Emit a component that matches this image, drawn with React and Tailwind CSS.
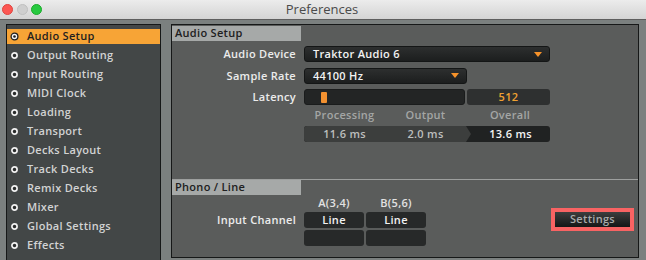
import React from 'react';

const font = { fontFamily: '"Open Sans", "Liberation Sans", Arial, sans-serif' };

const items = [
  'Audio Setup',
  'Output Routing',
  'Input Routing',
  'MIDI Clock',
  'Loading',
  'Transport',
  'Decks Layout',
  'Track Decks',
  'Remix Decks',
  'Mixer',
  'Global Settings',
  'Effects',
];

const Radio = ({ active }) =>
  active ? (
    <svg width="9" height="9" viewBox="0 0 9 9" className="shrink-0">
      <circle cx="4.5" cy="4.5" r="3.4" fill="#f4f4f4" stroke="#1e1e1e" strokeWidth="1.3" />
      <circle cx="4.5" cy="4.5" r="1.3" fill="#1e1e1e" />
    </svg>
  ) : (
    <svg width="9" height="9" viewBox="0 0 9 9" className="shrink-0">
      <circle cx="4.5" cy="4.5" r="2.6" fill="#2a2c2c" stroke="#f0f0f0" strokeWidth="1.7" />
    </svg>
  );

const Caret = () => (
  <svg width="8" height="5" viewBox="0 0 8 5" className="shrink-0">
    <path d="M0 0 H8 L4 5 Z" fill="#f6922a" />
  </svg>
);

const Dropdown = ({ value, width }) => (
  <div
    className={`h-[16px] ${width} flex items-center justify-between pl-[8px] pr-[7px] rounded-[3px] border border-[#141616] bg-gradient-to-b from-[#2d2f2f] to-[#1c1e1e] text-[11px] font-semibold tracking-[0.3px] text-[#f2f2f2]`}
  >
    <span>{value}</span>
    <Caret />
  </div>
);

const SectionHeader = ({ children }) => (
  <div className="w-[129px] h-[15px] bg-[#a6a9a8] pl-[3px] flex items-center text-[11px] font-semibold tracking-[0.3px] text-[#202020]">
    {children}
  </div>
);

export default function App() {
  return (
    <div className="w-[646px] h-[260px] overflow-hidden bg-[#7b807f] flex flex-col" style={font}>
      {/* title bar */}
      <div className="h-[20px] shrink-0 flex items-center relative bg-gradient-to-b from-[#ececec] to-[#d4d4d4] border-b border-[#5e5e5e]">
        <div className="flex items-center gap-[3.5px] pl-[2px]">
          <span className="w-[11px] h-[11px] rounded-full bg-[#fc5753] border border-[#e0443e]" />
          <span className="w-[11px] h-[11px] rounded-full bg-[#cfcfcf] border border-[#c0c0c0]" />
          <span className="w-[11px] h-[11px] rounded-full bg-[#28c940] border border-[#1aab29]" />
        </div>
        <div className="flex-1 text-center text-[13px] text-[#4a4a4a] pr-[44px]">Preferences</div>
      </div>

      {/* body */}
      <div className="flex flex-1 pt-[4px] pl-[6px]">
        {/* sidebar */}
        <div className="w-[155px] border-t border-l border-r border-[#161818] bg-[#434747] pt-[4px] flex flex-col gap-[4px]">
          {items.map((it, i) => (
            <div
              key={it}
              className={`h-[15px] flex items-center gap-[8px] pl-[3px] text-[11px] font-semibold tracking-[0.3px] ${
                i === 0 ? 'bg-[#f7a436] text-[#1f1f1f]' : 'text-[#d2d3d3]'
              }`}
            >
              <Radio active={i === 0} />
              <span>{it}</span>
            </div>
          ))}
        </div>

        {/* main panel */}
        <div className="ml-[10px] w-[468px] h-[234px] border border-[#161818] bg-[#5a5c5b] pt-[1px] flex flex-col">
          <SectionHeader>Audio Setup</SectionHeader>

          <div className="flex flex-col gap-[5px] mt-[5px] text-[11px] font-semibold tracking-[0.3px] text-[#ececec]">
            <div className="flex items-center">
              <div className="w-[124px] text-right">Audio Device</div>
              <div className="ml-[8px]">
                <Dropdown value="Traktor Audio 6" width="w-[246px]" />
              </div>
            </div>
            <div className="flex items-center">
              <div className="w-[124px] text-right">Sample Rate</div>
              <div className="ml-[8px]">
                <Dropdown value="44100 Hz" width="w-[163px]" />
              </div>
            </div>
            <div className="flex items-center">
              <div className="w-[124px] text-right">Latency</div>
              <div className="ml-[8px] flex gap-[2px]">
                <div className="w-[161px] h-[16px] rounded-[3px] bg-[#232525] border border-[#1a1c1c] flex items-center pl-[16px]">
                  <div className="w-[6px] h-[11px] rounded-[1px] bg-[#f39130]" />
                </div>
                <div className="w-[83px] h-[16px] rounded-[3px] bg-[#2e3030] flex items-center justify-center text-[#f0a232]">
                  512
                </div>
              </div>
            </div>
          </div>

          {/* latency breakdown */}
          <div className="ml-[132px] w-[246px] mt-[1px] text-[11px] font-semibold tracking-[0.3px]">
            <div className="flex text-[#a4a6a5]">
              <div className="w-[81px] text-center">Processing</div>
              <div className="w-[81px] text-center">Output</div>
              <div className="flex-1 text-center pl-[4px]">Overall</div>
            </div>
            <div className="mt-[3px] h-[16px] rounded-[3px] bg-[#202222] flex">
              <div className="w-[167px] flex bg-[#3c3e3d] rounded-l-[3px] [clip-path:polygon(0_0,162px_0,167px_50%,162px_100%,0_100%)] text-[#bdbebe] items-center">
                <div className="w-[81px] text-center">11.6 ms</div>
                <div className="w-[81px] text-center">2.0 ms</div>
              </div>
              <div className="flex-1 flex items-center justify-center text-[#f4f4f4]">13.6 ms</div>
            </div>
          </div>

          <div className="mt-[37px] border-t border-[#9d9f9e]" />
          <SectionHeader>Phono / Line</SectionHeader>

          <div className="flex items-start text-[11px] font-semibold tracking-[0.3px] text-[#ececec]">
            <div className="w-[124px] text-right mt-[17px]">Input Channel</div>
            <div className="ml-[8px] flex gap-[2px] mt-[1px]">
              {['A(3,4)', 'B(5,6)'].map((l) => (
                <div key={l} className="flex flex-col items-center gap-[2px]">
                  <div className="h-[14px] leading-[14px] text-[#e2e2e2]">{l}</div>
                  <div className="w-[60px] h-[16px] rounded-[3px] bg-[#272929] flex items-center justify-center text-[#f2f2f2]">
                    Line
                  </div>
                  <div className="w-[60px] h-[16px] rounded-[3px] bg-[#272929]" />
                </div>
              ))}
            </div>
            <div className="ml-auto mr-[4px] mt-[13px] border-[4px] border-[#f86363]">
              <div className="w-[75px] h-[15px] bg-gradient-to-b from-[#3c3e3e] to-[#151717] flex items-center justify-center text-[#a9abab]">
                Settings
              </div>
            </div>
          </div>
        </div>
      </div>
    </div>
  );
}
